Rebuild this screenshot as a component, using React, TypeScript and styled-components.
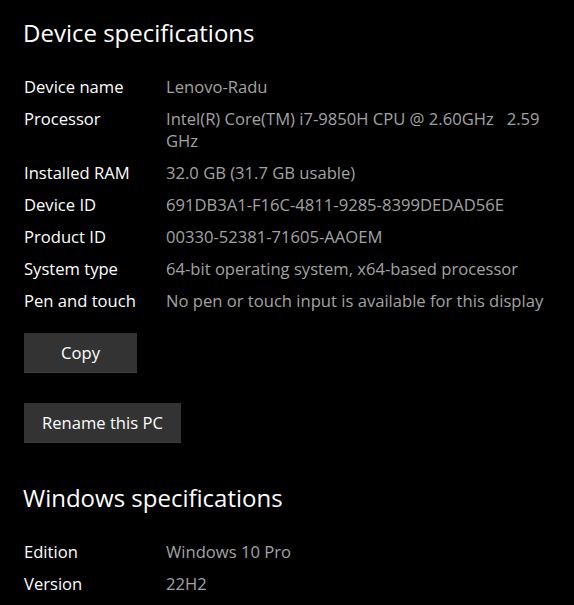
import React from 'react';
import styled, { createGlobalStyle } from 'styled-components';

const GlobalStyle = createGlobalStyle`
  html, body {
    margin: 0;
    padding: 0;
    background: #000;
  }
  body {
    font-family: "Open Sans", "Noto Sans", "Liberation Sans", sans-serif;
    -webkit-font-smoothing: antialiased;
  }
`;

const Page = styled.main`
  width: 574px;
  min-height: 605px;
  box-sizing: border-box;
  padding: 16px 12px 0 24px;
  background: #000;
  color: #fff;
`;

const Heading = styled.h2<{ $top?: number }>`
  margin: ${({ $top }) => $top ?? 0}px 0 0 -1px;
  font-size: 24px;
  font-weight: 400;
  line-height: 34px;
  color: #fff;
`;

const SpecList = styled.dl`
  display: grid;
  grid-template-columns: 142px 1fr;
  row-gap: 10px;
  margin: 26px 0 0;
`;

const Label = styled.dt`
  font-size: 16.6px;
  line-height: 22px;
  color: #fff;
`;

const Value = styled.dd`
  margin: 0;
  font-size: 16.6px;
  line-height: 22px;
  color: #a3a3a3;
`;

const Actions = styled.div`
  display: flex;
  flex-direction: column;
  align-items: flex-start;
  gap: 30px;
  margin-top: 21px;
`;

const Button = styled.button`
  height: 40px;
  min-width: 113px;
  padding: 0 18px;
  border: none;
  border-bottom: 1px solid #3d3d3d;
  background: #333;
  color: #fff;
  font-family: inherit;
  font-size: 16.6px;
  cursor: pointer;
`;

type Spec = [string, string];

const device: Spec[] = [
  ['Device name', 'Lenovo-Radu'],
  ['Processor', 'Intel(R) Core(TM) i7-9850H CPU @ 2.60GHz\u00a0\u00a0 2.59 GHz'],
  ['Installed RAM', '32.0 GB (31.7 GB usable)'],
  ['Device ID', '691DB3A1-F16C-4811-9285-8399DEDAD56E'],
  ['Product ID', '00330-52381-71605-AAOEM'],
  ['System type', '64-bit operating system, x64-based processor'],
  ['Pen and touch', 'No pen or touch input is available for this display'],
];

const windows: Spec[] = [
  ['Edition', 'Windows 10 Pro'],
  ['Version', '22H2'],
];

const Specs = ({ items }: { items: Spec[] }) => (
  <SpecList>
    {items.map(([k, v]) => (
      <React.Fragment key={k}>
        <Label>{k}</Label>
        <Value>{v}</Value>
      </React.Fragment>
    ))}
  </SpecList>
);

export default function App() {
  return (
    <>
      <GlobalStyle />
      <Page>
        <Heading>Device specifications</Heading>
        <Specs items={device} />
        <Actions>
          <Button>Copy</Button>
          <Button>Rename this PC</Button>
        </Actions>
        <Heading $top={38}>Windows specifications</Heading>
        <Specs items={windows} />
      </Page>
    </>
  );
}
